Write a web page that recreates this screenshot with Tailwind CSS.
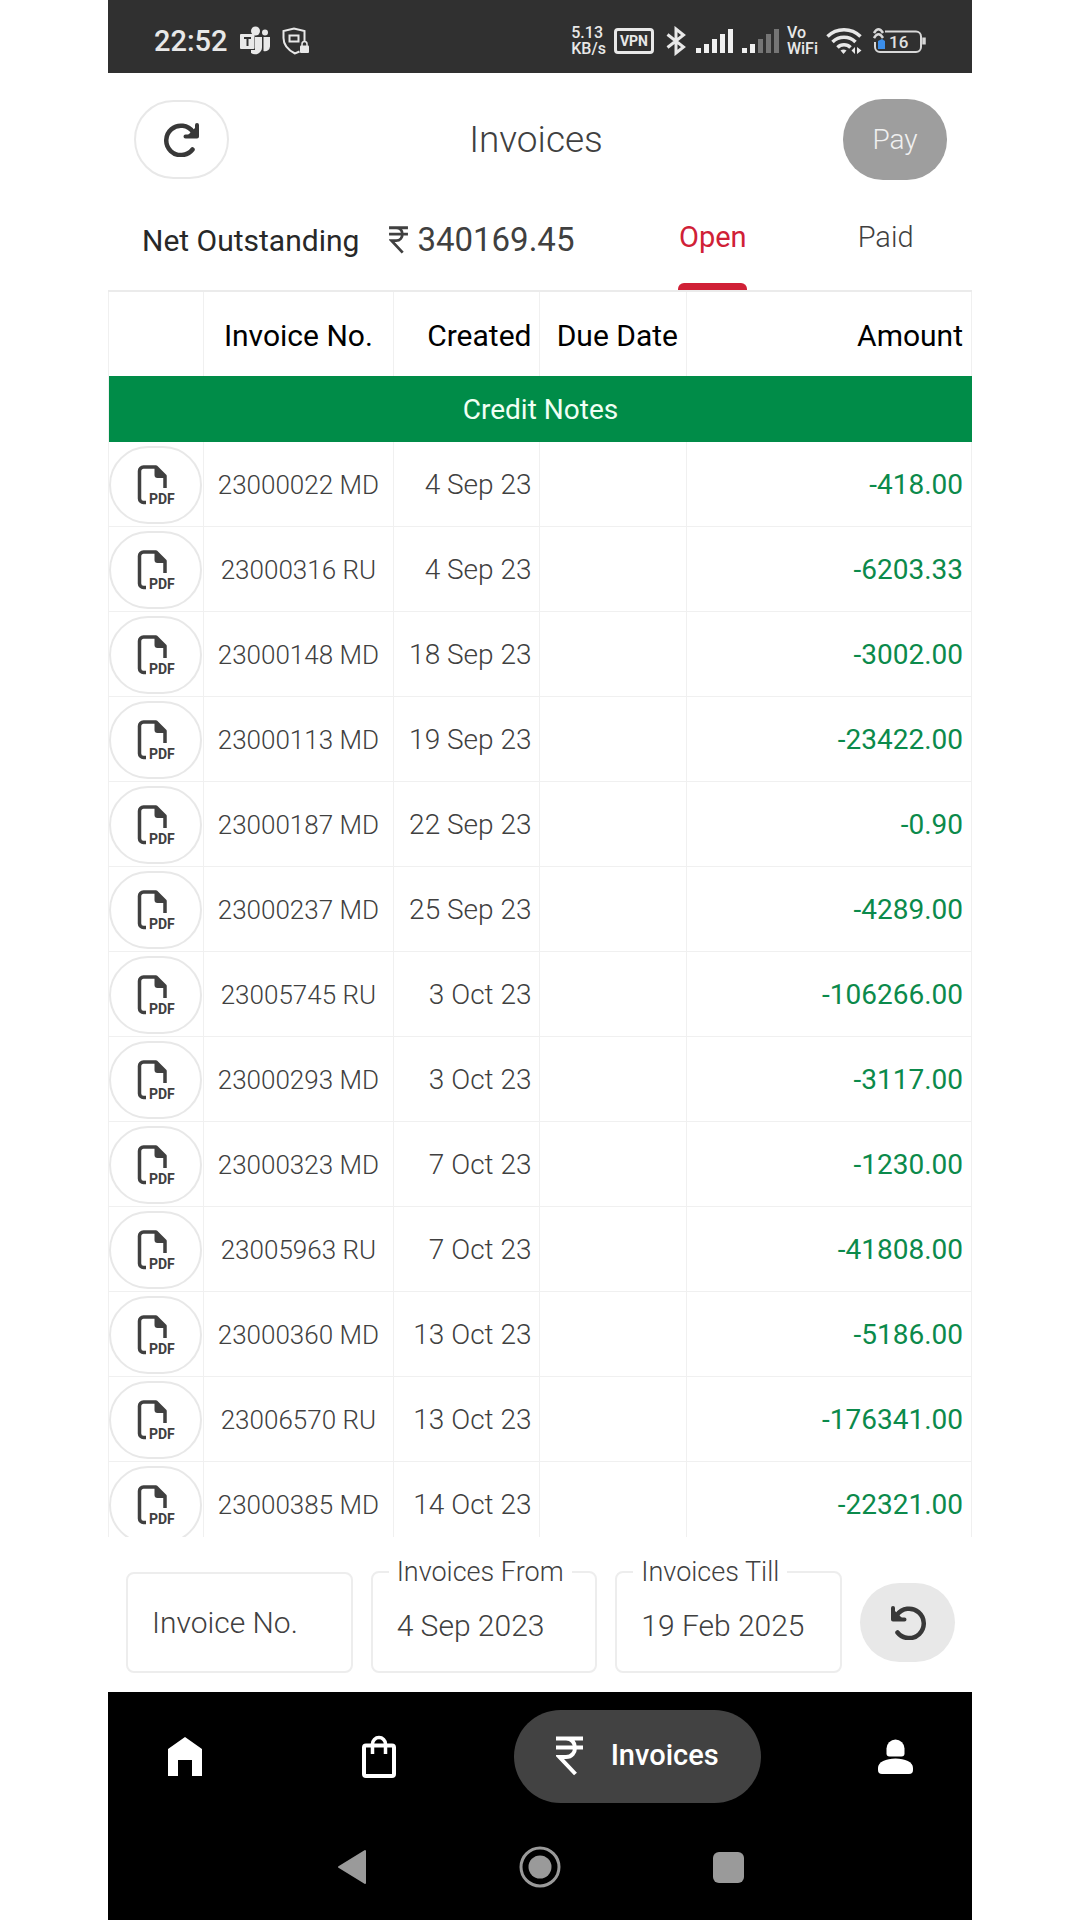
<!doctype html>
<html lang="en">

<head>
  <meta charset="UTF-8" />
  <meta name="viewport" content="width=device-width, initial-scale=1.0" />
  <title>Invoices</title>
  <script src="https://cdn.jsdelivr.net/npm/@tailwindcss/browser@4"></script>
</head>

<body class="bg-white font-['Roboto',sans-serif] antialiased">
  <!-- shared icons -->
  <svg class="hidden">
    <symbol id="icon-pdf" viewBox="0 0 38 40">
      <path d="M9 37.500H6.500a4 4 0 0 1-4-4V6a4 4 0 0 1 4-4H19l9 9v12" fill="none" stroke="#404040" stroke-width="3.500" stroke-linecap="butt" stroke-linejoin="round" />
      <path d="M17.500 2H20l9 9v2h-8.500a3 3 0 0 1-3-3z" fill="#404040" />
      <text x="12" y="39" font-family="Roboto, sans-serif" font-size="14" font-weight="700" fill="#404040">PDF</text>
    </symbol>
    <symbol id="icon-rupee" viewBox="0 0 27 40">
      <path d="M0 2.500H27M0 11.500H27M7 2.500h3c12 0 12 18.500 0 18.500H3.500L19.500 38" fill="none" stroke="currentColor" stroke-width="4" />
    </symbol>
    <symbol id="icon-reload" viewBox="0 0 36 34">
      <path d="M28.500 26.500A14.700 14.700 0 1 1 29 9" fill="none" stroke="#383838" stroke-width="4.500" stroke-linecap="round" />
      <path d="M33 2v11.500H21.500" fill="none" stroke="#383838" stroke-width="4" stroke-linecap="round" stroke-linejoin="round" />
      <path d="M33 3v11H22z" fill="#383838" />
    </symbol>
  </svg>

  <div class="mx-[10%] h-screen flex flex-col overflow-hidden">
    <!-- status bar -->
    <div class="h-[73px] shrink-0 bg-[#303030] flex items-center justify-between pl-[46px] pr-[45px] pt-2 text-[#e8e8e8]">
      <div class="flex items-center">
        <span class="text-[29px] leading-8 font-medium">22:52</span>
        <svg class="ml-3 w-[30px] h-[30px]" viewBox="0 0 30 30" fill="#e8e8e8">
          <circle cx="15.500" cy="5" r="4.500" />
          <circle cx="25" cy="6.500" r="3" />
          <path d="M15 11h7v10a7 7 0 0 1-11 6v-3h4z" />
          <path d="M23.500 11H30v9a5 5 0 0 1-6.500 5z" />
          <rect y="8" width="14.500" height="15" rx="1" />
          <path d="M4 12h7M7.500 12v8" stroke="#303030" stroke-width="2" />
        </svg>
        <svg class="ml-3 w-[27px] h-[28px]" viewBox="0 0 27 28" fill="none" stroke="#e8e8e8" stroke-width="2">
          <path d="M17.500 24.500 13 26.500C5 22.500 1.500 17 1.500 11V4L12 1.500 22.500 4v11" />
          <path d="M7.500 8.500h9v6h-9z" />
          <path d="M10.500 11.500h3" stroke="#303030" />
          <path d="M20 19v-2a2.500 2.500 0 0 1 5 0v2" stroke-width="1.500" />
          <rect x="18" y="18.500" width="9" height="7.500" rx="1" fill="#e8e8e8" stroke="none" />
        </svg>
      </div>

      <div class="flex items-center">
        <div class="text-base leading-4 font-medium">
          <div>5.13</div>
          <div>KB/s</div>
        </div>
        <div class="ml-2 w-10 h-[26px] rounded-sm border-3 border-[#e8e8e8] flex items-center justify-center text-sm font-bold">VPN</div>
        <svg class="ml-3 w-5 h-[30px]" viewBox="0 0 20 30" fill="none" stroke="#e8e8e8" stroke-width="3">
          <path d="M1.500 8.500 17.500 21 10 27v-24L17.500 9 1.500 21.500" />
        </svg>
        <svg class="ml-[10px] w-[37px] h-[26px]" viewBox="0 0 37 26" fill="#f0f0f0">
          <rect y="20" width="5" height="5" />
          <rect x="8" y="16" width="5" height="9" />
          <rect x="16" y="11" width="5" height="14" />
          <rect x="24" y="6" width="5" height="19" />
          <rect x="32" y="1" width="5" height="24" />
        </svg>
        <svg class="ml-[9px] w-[37px] h-[26px]" viewBox="0 0 37 26" fill="#f0f0f0">
          <rect y="20" width="5" height="5" />
          <rect x="8" y="16" width="5" height="9" />
          <g fill="#757575">
            <rect x="16" y="11" width="5" height="14" />
            <rect x="24" y="6" width="5" height="19" />
            <rect x="32" y="1" width="5" height="24" />
          </g>
        </svg>
        <div class="ml-2 text-base leading-4 font-medium">
          <div>Vo</div>
          <div>WiFi</div>
        </div>
        <svg class="ml-2 w-9 h-[28px]" viewBox="0 0 36 28" fill="none" stroke="#e8e8e8" stroke-width="3.500">
          <path d="M1.500 9.500a23.500 23.500 0 0 1 33 0M6.500 15a16.500 16.500 0 0 1 23 0M11.500 20.500a9 9 0 0 1 13 0" />
          <path d="M14.500 23.500a5 5 0 0 1 6 0l-3 3.500z" fill="#e8e8e8" stroke="none" />
          <path d="M25.500 23.500 29 20v7zM35.500 23.500 31 20v7z" fill="#e8e8e8" stroke="none" />
        </svg>
        <svg class="ml-[11px] w-[54px] h-[28px]" viewBox="0 0 54 28" fill="none" stroke="#d8d8d8" stroke-width="2">
          <path d="M12 4.500h31a5 5 0 0 1 5 5V20a5 5 0 0 1-5 5H7a5 5 0 0 1-5-5v-5" />
          <path d="M51 10.500v7" stroke-width="3.500" />
          <path d="M1 6c3-5 6-5 9 0M1 11c3-5 6-5 9 0" stroke-width="2.500" />
          <path d="M5 14l4-2 3 2v8H5z" fill="#3b8eea" stroke="none" />
          <text x="16" y="21" font-family="Roboto, sans-serif" font-size="17" font-weight="500" fill="#e0e0e0" stroke="none">16</text>
        </svg>
      </div>
    </div>

    <!-- title bar -->
    <header class="shrink-0 flex items-center justify-between pt-[26px] pb-2 pl-[26px] pr-[25px]">
      <button aria-label="Reload" class="w-[95px] h-[79px] rounded-[40px] border-2 border-[#e8e8e8] flex items-center justify-center">
        <svg class="w-9 h-[34px]"><use href="#icon-reload" /></svg>
      </button>
      <h1 class="text-[37px] leading-10 font-light text-[#404040]">Invoices</h1>
      <button class="w-[104px] h-[81px] rounded-[40px] bg-[#9e9e9e] text-[28px] font-light text-[#f0f0f0]">Pay</button>
    </header>

    <!-- balance and tabs -->
    <div class="h-[104px] shrink-0 flex border-b-2 border-[#ebebeb]">
      <div class="w-3/5 flex items-center pl-[34px] pt-[2px] text-[#404040]">
        <span class="text-[30px] text-[#282828]">Net Outstanding</span>
        <svg class="ml-[30px] w-[19px] h-[28px]"><use href="#icon-rupee" /></svg>
        <span class="ml-[9px] text-[33px]">340169.45</span>
      </div>
      <nav class="w-2/5 flex text-[29px]">
        <a href="#open" class="flex-1 flex flex-col items-center justify-between pt-[28px] text-[#d02036]">
          <span>Open</span>
          <span class="w-[69px] h-[7px] rounded-t-md bg-[#d02036]"></span>
        </a>
        <a href="#paid" class="flex-1 flex flex-col items-center pt-[28px] font-light text-[#404040]">Paid</a>
      </nav>
    </div>

    <!-- invoice list -->
    <main class="flex-1 min-h-0 overflow-y-auto [scrollbar-width:none]">
      <table class="w-full table-fixed border-separate border-spacing-0 border-l border-[#f0f0f0]">
        <colgroup>
          <col class="w-[11%]" />
          <col class="w-[22%]" />
          <col class="w-[17%]" />
          <col class="w-[17%]" />
          <col class="w-[33%]" />
        </colgroup>
        <thead class="text-[30px] text-black">
          <tr class="h-[84px]">
            <td class="border-r border-[#f0f0f0]"></td>
            <th class="border-r border-[#f0f0f0] pt-[2px] font-normal">Invoice No.</th>
            <th class="border-r border-[#f0f0f0] pt-[2px] font-normal text-right pr-2">Created</th>
            <th class="border-r border-[#f0f0f0] pt-[2px] pl-2 font-normal whitespace-nowrap">Due Date</th>
            <th class="border-r border-[#f0f0f0] pt-[2px] font-normal text-right pr-2">Amount</th>
          </tr>
          <tr class="h-[66px]">
            <th colspan="5" class="bg-[#008c48] pt-[2px] text-[28px] font-normal text-[#f0fff4]">Credit Notes</th>
          </tr>
        </thead>
        <tbody id="invoice-rows"></tbody>
      </table>
    </main>

    <!-- filters -->
    <form class="shrink-0 flex items-end gap-[18px] pt-[21px] pb-[19px] pl-[18px] pr-[17px] text-[30px] font-light text-[#404040]">
      <div class="flex-1 grid grid-cols-3 items-end gap-[18px]">
        <input type="text" aria-label="Invoice No." placeholder="Invoice No."
          class="w-full h-[101px] rounded-lg border-2 border-[#ededed] pl-6 placeholder:text-[#404040]" />
        <fieldset class="min-w-0 h-[115px] rounded-lg border-2 border-[#ededed] px-4">
          <legend class="px-2 text-[27px] leading-7 whitespace-nowrap"><label for="invoices-from">Invoices From</label></legend>
          <input id="invoices-from" type="text" value="4 Sep 2023" class="w-full h-[78px] pl-2" />
        </fieldset>
        <fieldset class="min-w-0 h-[115px] rounded-lg border-2 border-[#ededed] px-4">
          <legend class="px-2 text-[27px] leading-7 whitespace-nowrap"><label for="invoices-till">Invoices Till</label></legend>
          <input id="invoices-till" type="text" value="19 Feb 2025" class="w-full h-[78px] pl-2" />
        </fieldset>
      </div>
      <button type="reset" aria-label="Reset filters" class="w-[95px] h-[79px] mb-[11px] rounded-[40px] bg-[#e8e8e8] flex items-center justify-center">
        <svg class="w-9 h-[34px] -scale-x-100"><use href="#icon-reload" /></svg>
      </button>
    </form>

    <!-- app navigation -->
    <nav class="shrink-0 h-[128px] bg-black text-white flex items-center justify-between pl-[60px] pr-[59px]">
      <a href="#home" aria-label="Home">
        <svg class="w-[34px] h-[39px]" viewBox="0 0 34 39" fill="currentColor">
          <path d="M0 12 17 0l17 12v27H24V23H10v16H0z" />
        </svg>
      </a>
      <a href="#orders" aria-label="Orders" class="ml-[43px]">
        <svg class="w-[34px] h-[43px]" viewBox="0 0 34 43" fill="none" stroke="currentColor" stroke-width="4">
          <rect x="2" y="10.500" width="30" height="30.500" rx="2" />
          <path d="M10.500 19V9a6.500 6.500 0 0 1 13 0v10" stroke-width="3.500" />
        </svg>
      </a>
      <a href="#invoices" class="w-[247px] h-[93px] rounded-full bg-[#424242] flex items-center justify-center gap-[28px] text-[29px] font-medium">
        <svg class="w-[27px] h-10"><use href="#icon-rupee" /></svg>
        Invoices
      </a>
      <a href="#account" aria-label="Account">
        <svg class="w-[35px] h-[35px]" viewBox="0 0 35 35" fill="currentColor">
          <path d="M8.500 14.500V9.500a9 9 0 0 1 18 0v5q0 3-3 3h-12q-3 0-3-3z" />
          <path d="M0 29c0-6 8-9.500 17.500-9.500S35 23 35 29v2q0 4-4 4H4q-4 0-4-4z" />
        </svg>
      </a>
    </nav>

    <!-- system navigation -->
    <div class="shrink-0 h-[100px] bg-black flex items-start justify-center pt-[25px]">
      <button aria-label="Back" class="w-[188px] h-[44px] flex items-center justify-center">
        <svg class="w-[30px] h-9" viewBox="0 0 30 36" fill="#9a9a9a" stroke="#9a9a9a" stroke-width="2" stroke-linejoin="round">
          <path d="M28 2v32L2 18z" />
        </svg>
      </button>
      <button aria-label="Home screen" class="w-[188px] h-[44px] flex items-center justify-center">
        <svg class="w-[42px] h-[42px]" viewBox="0 0 42 42">
          <circle cx="21" cy="21" r="19" fill="none" stroke="#9a9a9a" stroke-width="3" />
          <circle cx="21" cy="21" r="11.500" fill="#9a9a9a" />
        </svg>
      </button>
      <button aria-label="Recent apps" class="w-[188px] h-[44px] flex items-center justify-center">
        <span class="w-[31px] h-[31px] rounded-md bg-[#9a9a9a]"></span>
      </button>
    </div>
  </div>

  <script>
    const invoices = [
      ["23000022 MD", "4 Sep 23", "-418.00"],
      ["23000316 RU", "4 Sep 23", "-6203.33"],
      ["23000148 MD", "18 Sep 23", "-3002.00"],
      ["23000113 MD", "19 Sep 23", "-23422.00"],
      ["23000187 MD", "22 Sep 23", "-0.90"],
      ["23000237 MD", "25 Sep 23", "-4289.00"],
      ["23005745 RU", "3 Oct 23", "-106266.00"],
      ["23000293 MD", "3 Oct 23", "-3117.00"],
      ["23000323 MD", "7 Oct 23", "-1230.00"],
      ["23005963 RU", "7 Oct 23", "-41808.00"],
      ["23000360 MD", "13 Oct 23", "-5186.00"],
      ["23006570 RU", "13 Oct 23", "-176341.00"],
      ["23000385 MD", "14 Oct 23", "-22321.00"],
    ];

    document.getElementById("invoice-rows").innerHTML = invoices.map(([number, created, amount]) => `
      <tr class="h-[85px]">
        <td class="border-r border-b border-[#f0f0f0] pt-[2px]">
          <button aria-label="Open PDF ${number}" class="mx-auto w-[93px] h-[78px] rounded-[40px] border-2 border-[#e8e8e8] flex items-center justify-center">
            <svg class="w-[38px] h-10"><use href="#icon-pdf" /></svg>
          </button>
        </td>
        <td class="border-r border-b border-[#f0f0f0] pt-[2px] text-center text-[26px] font-light text-[#404040]">${number}</td>
        <td class="border-r border-b border-[#f0f0f0] pt-[2px] pr-2 text-right text-[28px] font-light text-[#404040]">${created}</td>
        <td class="border-r border-b border-[#f0f0f0]"></td>
        <td class="border-r border-b border-[#f0f0f0] pt-[2px] pr-2 text-right text-[28px] text-[#0b8a4b]">${amount}</td>
      </tr>`).join("");
  </script>
</body>

</html>
